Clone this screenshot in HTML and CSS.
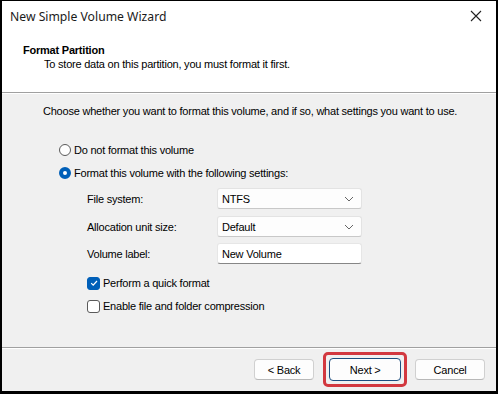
FILE: index.html
```html
<!DOCTYPE html>
<html>
<head>
<meta charset="utf-8">
<link rel="stylesheet" href="styles.css">
</head>
<body>
<div class="window">
  <div class="header">
    <div class="titlebar">
      <span class="title">New Simple Volume Wizard</span>
      <svg class="close" width="12" height="12" viewBox="0 0 12 12"><path d="M1 1L11 11M11 1L1 11" stroke="#222" stroke-width="1.1" fill="none"/></svg>
    </div>
    <div class="heading">
      <div class="h1">Format Partition</div>
      <div class="h2">To store data on this partition, you must format it first.</div>
    </div>
  </div>
  <div class="body">
    <div class="content">
      <div class="intro">Choose whether you want to format this volume, and if so, what settings you want to use.</div>
      <div class="radios">
        <div class="opt"><span class="radio"></span><span>Do not format this volume</span></div>
        <div class="opt"><span class="radio on"></span><span>Format this volume with the following settings:</span></div>
      </div>
      <div class="settings">
        <div class="row"><span class="lbl">File system:</span><div class="combo"><span>NTFS</span><svg width="10" height="6" viewBox="0 0 10 6"><path d="M1 1L5 5L9 1" stroke="#666" stroke-width="1" fill="none"/></svg></div></div>
        <div class="row"><span class="lbl">Allocation unit size:</span><div class="combo"><span>Default</span><svg width="10" height="6" viewBox="0 0 10 6"><path d="M1 1L5 5L9 1" stroke="#666" stroke-width="1" fill="none"/></svg></div></div>
        <div class="row"><span class="lbl">Volume label:</span><div class="textbox">New Volume</div></div>
      </div>
      <div class="checks">
        <div class="opt"><span class="check on"><svg width="10" height="10" viewBox="0 0 10 10"><path d="M2.2 5.2L4.2 7.2L8 3" stroke="#fff" stroke-width="1.2" fill="none"/></svg></span><span>Perform a quick format</span></div>
        <div class="opt"><span class="check"></span><span>Enable file and folder compression</span></div>
      </div>
    </div>
    <div class="footer">
      <button class="btn">&lt; Back</button>
      <div class="highlight"><button class="btn default">Next &gt;</button></div>
      <button class="btn cancel">Cancel</button>
    </div>
  </div>
</div>
</body>
</html>
```
FILE: styles.css
```css
html, body { margin: 0; padding: 0; background: #000; }
body { width: 498px; height: 394px; overflow: hidden; font-family: "Liberation Sans", Arial, sans-serif; font-size: 11px; letter-spacing: -0.22px; color: #000; }
.window { box-sizing: border-box; width: 498px; height: 394px; border-style: solid; border-color: #000; border-width: 1px 2px 3px 2px; display: flex; flex-direction: column; background: #f0f0f0; }
.header { background: #fff; height: 91px; border-bottom: 1px solid #a0a0a0; box-shadow: 0 1px 0 #fff; display: flex; flex-direction: column; }
.titlebar { height: 30px; display: flex; align-items: center; justify-content: space-between; padding: 0 14px 0 8px; }
.title { font-family: "Noto Sans", "Open Sans", sans-serif; font-size: 12.2px; letter-spacing: 0; color: #1a1a1a; }
.close { margin-top: -1px; }
.heading { padding: 12px 0 0 21px; line-height: 14px; }
.h1 { font-weight: bold; }
.h2 { padding-left: 21px; }
.body { flex: 1; display: flex; flex-direction: column; }
.content { flex: 1; padding: 11px 0 0 41px; border-bottom: 1px solid #a0a0a0; box-shadow: 0 1px 0 #fff; }
.intro { line-height: 14px; }
.radios { margin-top: 25px; padding-left: 16px; display: flex; flex-direction: column; gap: 9px; }
.opt { display: flex; align-items: center; gap: 3px; height: 14px; line-height: 14px; }
.radio { box-sizing: border-box; width: 12px; height: 12px; border-radius: 50%; border: 1px solid #5a5a5a; background: #fff; }
.radio.on { border: 4px solid #005fb8; background: #fff; }
.settings { margin-top: 8px; padding-left: 44px; display: flex; flex-direction: column; gap: 7px; }
.row { display: grid; grid-template-columns: 130px 145px; align-items: center; height: 21px; }
.row:last-child { margin-top: -1px; }
.combo { box-sizing: border-box; height: 21px; background: #fdfdfd; border: 1px solid #e3e3e3; border-bottom-color: #c8c8c8; border-radius: 3px; display: flex; align-items: center; justify-content: space-between; padding: 0 7px 0 4px; }
.textbox { box-sizing: border-box; height: 21px; background: #fff; border: 1px solid #e6e6e6; border-bottom: 1px solid #868686; border-radius: 3px; display: flex; align-items: center; padding: 0 4px; }
.checks { margin-top: 12px; padding-left: 44px; display: flex; flex-direction: column; gap: 9px; }
.check { box-sizing: border-box; width: 13px; height: 13px; border-radius: 3px; border: 1px solid #5a5a5a; background: #fff; display: flex; align-items: center; justify-content: center; }
.check.on { background: #005fb8; border-color: #005fb8; }
.footer { height: 43px; display: flex; align-items: center; padding: 0 11px 0 252px; gap: 0; }
.btn { box-sizing: border-box; width: 62px; height: 21px; font: inherit; letter-spacing: inherit; color: #000; background: #fdfdfd; border: 1px solid #d0d0d0; border-bottom-color: #b8b8b8; border-radius: 4px; padding: 0; }
.highlight { margin-left: 9px; border: 3px solid #d2383f; border-radius: 5px; padding: 3px; display: flex; }
.btn.default { width: 72px; height: 23px; border: 1px solid #1c4e80; }
.btn.cancel { width: 72px; margin-left: 8px; }
```
